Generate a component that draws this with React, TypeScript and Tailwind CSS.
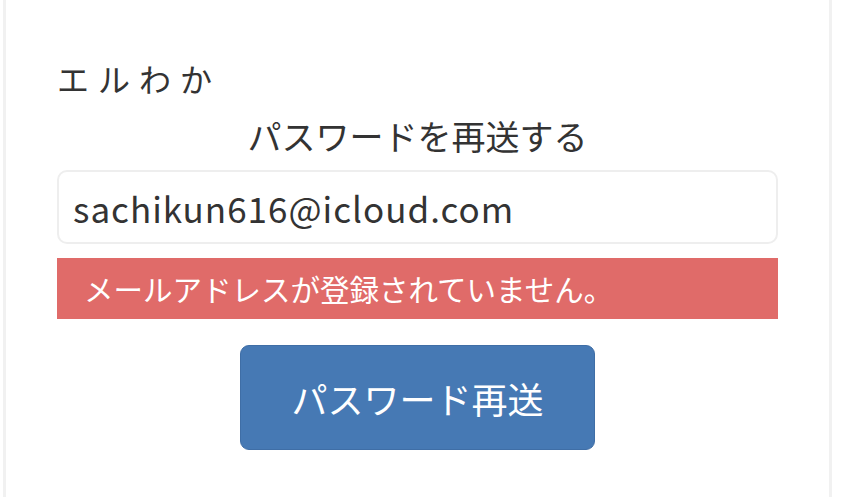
import React from 'react'

const font = { fontFamily: '"Noto Sans CJK JP", "Noto Sans", sans-serif' }

const App: React.FC = () => {
  return (
    <div className="h-[497px] w-[850px] overflow-hidden bg-white" style={font}>
      <div className="ml-[3px] h-full w-[829px] border-x-[3px] border-[#f1f1f1] px-[51px] pt-[56px]">
        {/* site name */}
        <div className="text-[32px] leading-[44px] tracking-[9px] text-[#333]">エルわか</div>

        {/* title */}
        <h1 className="mt-[14px] text-center text-[34px] leading-[44px] text-[#333]">パスワードを再送する</h1>

        {/* email */}
        <input
          type="email"
          defaultValue="sachikun616@icloud.com"
          className="mt-[12px] block h-[74px] w-full rounded-[10px] border-2 border-[#eeeeee] bg-white px-[14px] text-[35px] tracking-[1px] text-[#333] outline-none"
          style={font}
        />

        {/* error */}
        <div className="mt-[14px] flex h-[61px] items-center bg-[#e06b69] px-[27px] text-[29.5px] text-white">
          メールアドレスが登録されていません。
        </div>

        {/* submit */}
        <div className="mt-[26px] flex justify-center">
          <button
            type="button"
            className="h-[105px] w-[355px] rounded-[9px] border border-[#3f6ea6] bg-[#4679b4] text-[36px] text-white"
            style={font}
          >
            パスワード再送
          </button>
        </div>
      </div>
    </div>
  )
}

export default App
